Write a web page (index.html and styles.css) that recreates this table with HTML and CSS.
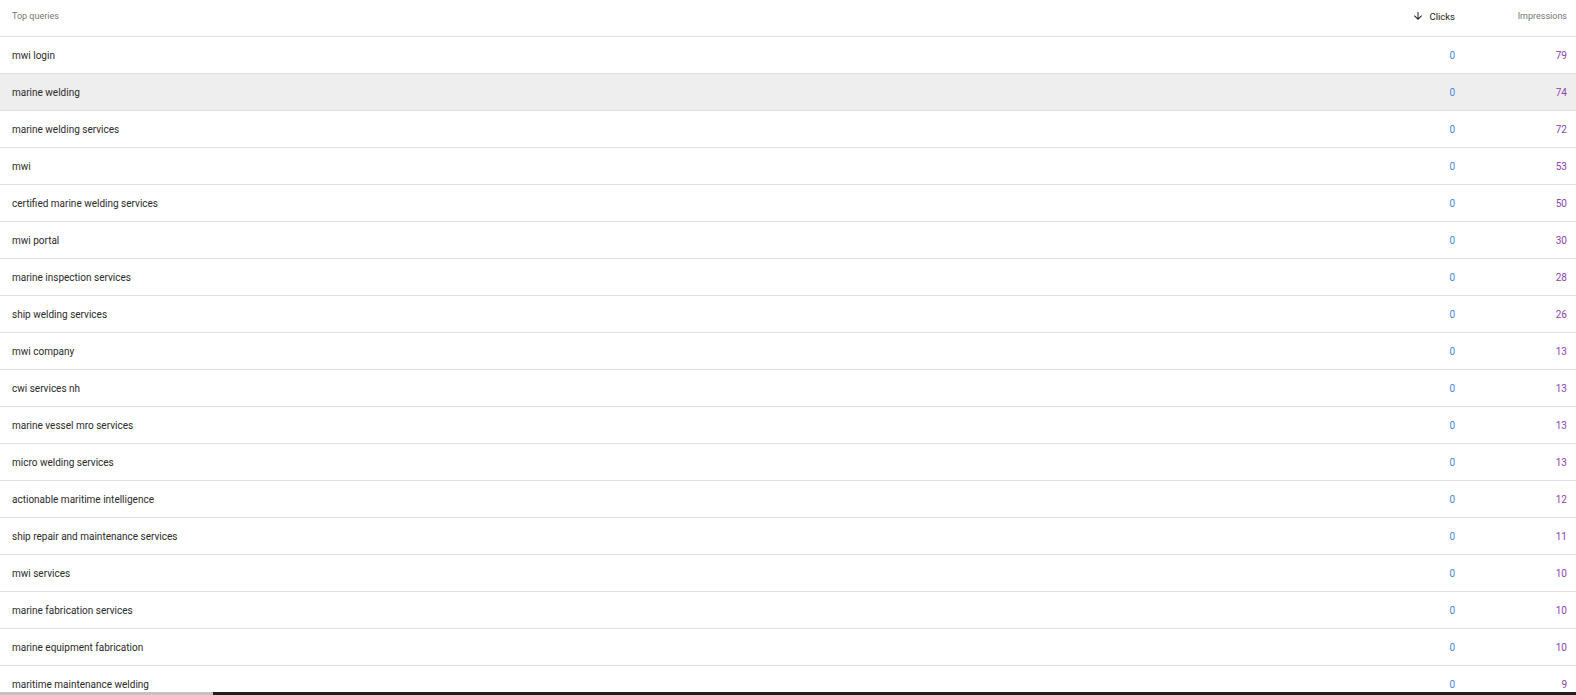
FILE: index.html
```html
<!DOCTYPE html>
<html lang="en">
<head>
    <meta charset="UTF-8">
    <meta name="viewport" content="width=device-width, initial-scale=1.0">
    <title>Top queries</title>
    <link rel="stylesheet" href="styles.css">
</head>
<body>
    <div class="table">
        <div class="row head">
            <span class="query">Top queries</span>
            <span class="num clicks sorted">
                <svg class="arrow" width="12" height="12" viewBox="0 0 24 24"><path d="M20 12l-1.41-1.41L13 16.17V4h-2v12.17l-5.58-5.59L4 12l8 8 8-8z" fill="#212121"/></svg>
                Clicks
            </span>
            <span class="num impr">Impressions</span>
        </div>
        <div id="rows"></div>
    </div>
    <div class="scrollbar"><div class="thumb"></div></div>

    <script>
        let queries = [
            ["mwi login", 0, 79],
            ["marine welding", 0, 74],
            ["marine welding services", 0, 72],
            ["mwi", 0, 53],
            ["certified marine welding services", 0, 50],
            ["mwi portal", 0, 30],
            ["marine inspection services", 0, 28],
            ["ship welding services", 0, 26],
            ["mwi company", 0, 13],
            ["cwi services nh", 0, 13],
            ["marine vessel mro services", 0, 13],
            ["micro welding services", 0, 13],
            ["actionable maritime intelligence", 0, 12],
            ["ship repair and maintenance services", 0, 11],
            ["mwi services", 0, 10],
            ["marine fabrication services", 0, 10],
            ["marine equipment fabrication", 0, 10],
            ["maritime maintenance welding", 0, 9]
        ];

        let html = "";
        queries.forEach((q, i) => {
            html += '<div class="row' + (i === 1 ? ' hover' : '') + '">' +
                '<span class="query">' + q[0] + '</span>' +
                '<span class="num clicks">' + q[1] + '</span>' +
                '<span class="num impr">' + q[2] + '</span>' +
                '</div>';
        });
        document.getElementById('rows').innerHTML = html;
    </script>
</body>
</html>
```

FILE: styles.css
```css
body {
    margin: 0;
    font-family: Roboto, 'Liberation Sans', sans-serif;
    font-size: 10px;
    color: #2a2a2a;
    background: #fff;
    overflow: hidden;
}
.row {
    display: grid;
    grid-template-columns: 1fr 120px 112px;
    align-items: center;
    border-bottom: 1px solid #e0e0e0;
    padding: 1px 9px 0 12px;
    box-sizing: border-box;
    height: 37px;
}
.row.hover { background: #eeeeee; }
.head { padding-bottom: 4px; padding-top: 0; }
.head .query, .head .impr { color: #757575; font-size: 9px; }
.head .sorted {
    color: #212121;
    font-size: 9.5px;
    display: flex;
    justify-content: flex-end;
    align-items: center;
    gap: 6px;
}
.num { text-align: right; }
.clicks { color: #4a86d8; }
.impr { color: #8e44ad; }
.scrollbar {
    position: fixed;
    left: 0;
    right: 0;
    bottom: 0;
    height: 3px;
    background: #1f1f1f;
}
.thumb { width: 213px; height: 3px; background: #c4c4c4; }
```
